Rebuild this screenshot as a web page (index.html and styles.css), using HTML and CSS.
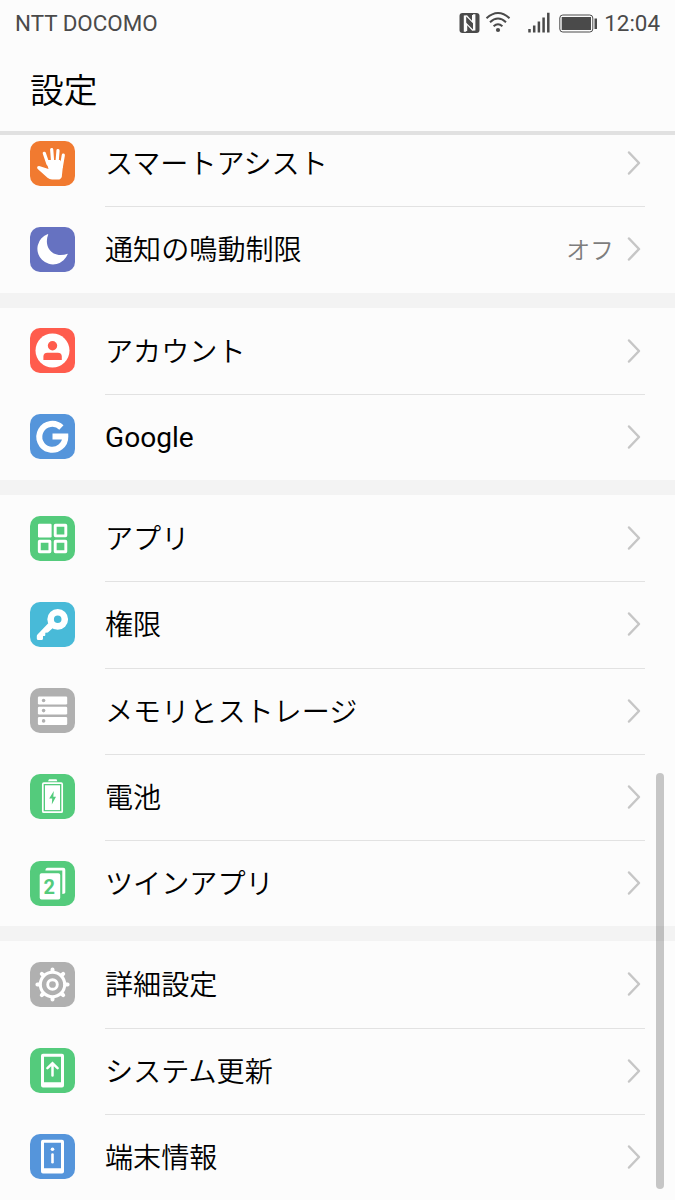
FILE: index.html
```html
<!DOCTYPE html>
<html lang="ja">
<head>
<meta charset="utf-8">
<title>設定</title>
<link rel="stylesheet" href="styles.css">
</head>
<body>
<div class="screen">
  <header class="header">
    <div class="status">
      <span class="carrier">NTT DOCOMO</span>
      <svg class="status-icons" width="140" height="24" viewBox="0 0 140 24">
        <rect x="1.5" y="2" width="20" height="20" rx="3" fill="#4a4a4a"/>
        <path d="M5.8 20.8V4.5L9 4.2L14 9.8V4H15.2V12.6L8.2 5.5V20.8Z" fill="#fcfcfc"/>
        <path d="M17.4 3.2V19.5L14.2 19.8L9.2 14.2V20H8V11.4L15 18.5V3.2Z" fill="#fcfcfc"/>
        <g fill="none" stroke="#4a4a4a" stroke-width="2">
          <path d="M28.5 7.2Q40-3.2 51.5 7.2"/>
          <path d="M32 11.2Q40 3.8 48 11.2"/>
          <path d="M35.6 15.2Q40 11.2 44.4 15.2"/>
        </g>
        <circle cx="40" cy="19" r="2.1" fill="#4a4a4a"/>
        <path d="M71.5 18v3.6M76.2 14.5v7.1M80.9 10.5v11.1M85.6 6.5v15.1M90.3 1.7v19.9" stroke="#4a4a4a" stroke-width="2.5"/>
        <rect x="101.8" y="4" width="33" height="17" rx="3" fill="none" stroke="#4a4a4a" stroke-width="1"/>
        <rect x="103.7" y="6" width="29.3" height="13" fill="#4a4a4a"/>
        <rect x="136.5" y="7.5" width="2.5" height="10.5" fill="#4a4a4a"/>
      </svg>
      <span class="clock">12:04</span>
    </div>
    <h1 class="title">設定</h1>
  </header>

  <main class="list">
    <section class="group">
      <div class="row">
        <svg class="icon orange" viewBox="0 0 45 45">
          <path d="M14.3 12.3L18 23M21.7 8.5L22.7 22M28 9.5L27 22M33.3 14.2L31.3 26" stroke="#fff" stroke-width="3.2" stroke-linecap="round"/>
          <path d="M16 19L18.5 28L10 25.2Q7.8 24.8 7.2 26Q6.8 27.2 8 28.2L17.5 36.8Q19.5 38.6 22 38.6H28Q31 38.6 31.8 35.8L33 24L30 19Z" fill="#fff"/>
        </svg>
        <span class="label">スマートアシスト</span>
        <svg class="chevron" viewBox="0 0 14 26"><path d="M2 2.5L12 13L2 23.5"/></svg>
      </div>
      <div class="row">
        <svg class="icon indigo" viewBox="0 0 45 45">
          <path d="M18 7A15.6 15.6 0 1 0 37.8 26.7C29.5 29.6 22.4 27.5 19 22C16.3 17.4 16.3 12.3 18.2 7.6Z" fill="#fff"/>
        </svg>
        <span class="label">通知の鳴動制限</span>
        <span class="value">オフ</span>
        <svg class="chevron" viewBox="0 0 14 26"><path d="M2 2.5L12 13L2 23.5"/></svg>
      </div>
    </section>

    <section class="group">
      <div class="row">
        <svg class="icon red" viewBox="0 0 45 45">
          <circle cx="22.5" cy="22.5" r="17" fill="#fff"/>
          <g fill="#ff5c4d"><circle cx="22.5" cy="17.7" r="4.7"/><path d="M13.4 32V28.5Q13.4 24.7 17.4 24.7H27.8Q31.8 24.7 31.8 28.5V32Z"/></g>
        </svg>
        <span class="label">アカウント</span>
        <svg class="chevron" viewBox="0 0 14 26"><path d="M2 2.5L12 13L2 23.5"/></svg>
      </div>
      <div class="row">
        <svg class="icon blue" viewBox="0 0 45 45">
          <path d="M31.4 13.5A13 13 0 1 0 35.3 22.5H22.5" fill="none" stroke="#fff" stroke-width="6"/>
        </svg>
        <span class="label latin">Google</span>
        <svg class="chevron" viewBox="0 0 14 26"><path d="M2 2.5L12 13L2 23.5"/></svg>
      </div>
    </section>

    <section class="group">
      <div class="row">
        <svg class="icon green" viewBox="0 0 45 45">
          <rect x="8" y="7.8" width="13.6" height="13.6" rx="1.2" fill="#fff"/>
          <g fill="none" stroke="#fff" stroke-width="2.9">
            <rect x="25.2" y="9.3" width="10.6" height="10.6" rx=".3"/>
            <rect x="9.3" y="25.2" width="10.6" height="10.6" rx=".3"/>
            <rect x="25.2" y="25.2" width="10.6" height="10.6" rx=".3"/>
          </g>
        </svg>
        <span class="label">アプリ</span>
        <svg class="chevron" viewBox="0 0 14 26"><path d="M2 2.5L12 13L2 23.5"/></svg>
      </div>
      <div class="row">
        <svg class="icon cyan" viewBox="0 0 45 45">
          <circle cx="27.7" cy="17.3" r="7.1" fill="none" stroke="#fff" stroke-width="6.6"/>
          <path d="M18.5 21L7.5 32.5Q6.8 33.2 6.8 34.2V36.5Q6.8 38 8.3 38H11.5Q13 38 13 36.5V34Q14.8 34.3 15.3 33.2V30.7Q18.3 30.8 18.7 29.7L24 25Z" fill="#fff"/>
        </svg>
        <span class="label">権限</span>
        <svg class="chevron" viewBox="0 0 14 26"><path d="M2 2.5L12 13L2 23.5"/></svg>
      </div>
      <div class="row">
        <svg class="icon gray" viewBox="0 0 45 45">
          <g fill="#fff"><rect x="7.9" y="8.5" width="29.3" height="8" rx="1.2"/><rect x="7.9" y="18.7" width="29.3" height="7.8" rx="1.2"/><rect x="7.9" y="28.9" width="29.3" height="8" rx="1.2"/></g>
          <g fill="#b0b0b0"><circle cx="13.6" cy="12.5" r="1.8"/><circle cx="13.6" cy="22.6" r="1.8"/><circle cx="13.6" cy="32.9" r="1.8"/></g>
        </svg>
        <span class="label">メモリとストレージ</span>
        <svg class="chevron" viewBox="0 0 14 26"><path d="M2 2.5L12 13L2 23.5"/></svg>
      </div>
      <div class="row">
        <svg class="icon green" viewBox="0 0 45 45">
          <path d="M18 7.3L19 5.2H26.5L27.3 7.3Z" fill="#fff"/>
          <rect x="12.8" y="9.2" width="19.4" height="29" rx="1" fill="none" stroke="#fff" stroke-width="1.7"/>
          <rect x="15" y="11.3" width="15" height="24.8" fill="#fff"/>
          <path d="M23.8 17L19.2 24.5H22.2L21.8 30.5L26 22.8H23.3Z" fill="#54cb7c"/>
        </svg>
        <span class="label">電池</span>
        <svg class="chevron" viewBox="0 0 14 26"><path d="M2 2.5L12 13L2 23.5"/></svg>
      </div>
      <div class="row">
        <svg class="icon green" viewBox="0 0 45 45">
          <rect x="9.7" y="12.2" width="20.5" height="26.4" rx="1.8" fill="#fff"/>
          <path d="M15.4 9.6Q15.4 6.7 17.7 6.7H33.3Q35.3 6.7 35.3 8.7V31.3Q35.3 33 32.3 33V9.6Z" fill="#fff"/>
          <text class="badge-number" x="19.2" y="32.5">2</text>
        </svg>
        <span class="label">ツインアプリ</span>
        <svg class="chevron" viewBox="0 0 14 26"><path d="M2 2.5L12 13L2 23.5"/></svg>
      </div>
    </section>

    <section class="group">
      <div class="row">
        <svg class="icon gray" viewBox="0 0 45 45">
          <circle cx="22.5" cy="22.5" r="12.2" fill="none" stroke="#fff" stroke-width="3.1"/>
          <circle cx="22.5" cy="22.5" r="4.8" fill="none" stroke="#fff" stroke-width="2.9"/>
          <path d="M22.5 9V7.4M22.5 36v1.6M9 22.5H7.4M36 22.5h1.6M13 13l-1.2-1.2M32 13l1.2-1.2M13 32l-1.2 1.2M32 32l1.2 1.2" stroke="#fff" stroke-width="4" stroke-linecap="round"/>
        </svg>
        <span class="label">詳細設定</span>
        <svg class="chevron" viewBox="0 0 14 26"><path d="M2 2.5L12 13L2 23.5"/></svg>
      </div>
      <div class="row">
        <svg class="icon green" viewBox="0 0 45 45">
          <path fill="#fff" fill-rule="evenodd" d="M13 5.8H32Q34 5.8 34 7.8V37.6Q34 39.6 32 39.6H13Q11 39.6 11 37.6V7.8Q11 5.8 13 5.8ZM14 8.8V34.2H31V8.8Z"/>
          <path d="M22.5 27.5V15.5M17.4 20.2L22.5 15.3L27.6 20.2" fill="none" stroke="#fff" stroke-width="2.5" stroke-linecap="round"/>
        </svg>
        <span class="label">システム更新</span>
        <svg class="chevron" viewBox="0 0 14 26"><path d="M2 2.5L12 13L2 23.5"/></svg>
      </div>
      <div class="row">
        <svg class="icon blue" viewBox="0 0 45 45">
          <path fill="#fff" fill-rule="evenodd" d="M13 5.8H32Q34 5.8 34 7.8V37.6Q34 39.6 32 39.6H13Q11 39.6 11 37.6V7.8Q11 5.8 13 5.8ZM14 8.8V34.2H31V8.8Z"/>
          <circle cx="22.5" cy="15.2" r="1.8" fill="#fff"/>
          <path d="M22.5 20.5V28.3" stroke="#fff" stroke-width="2.6" stroke-linecap="round"/>
        </svg>
        <span class="label">端末情報</span>
        <svg class="chevron" viewBox="0 0 14 26"><path d="M2 2.5L12 13L2 23.5"/></svg>
      </div>
    </section>
    <div class="scrollbar"></div>
  </main>
</div>
</body>
</html>
```
FILE: styles.css
```css
body {
  margin: 0;
  background: #fcfcfc;
}

.screen {
  display: flex;
  flex-direction: column;
  width: 675px;
  height: 1200px;
  overflow: hidden;
  color: #000;
  font-family: "Noto Sans CJK JP", sans-serif;
  font-weight: 350;
}

.header {
  box-sizing: border-box;
  flex: none;
  height: 135px;
  border-bottom: 4px solid #e1e1e1;
}

.status {
  display: flex;
  align-items: center;
  height: 46px;
  padding: 0 15px;
  color: #4a4a4a;
  font: 22.4px/46px Roboto, sans-serif;
}

.carrier {
  flex: 1;
}

.status-icons {
  margin-right: 6px;
}

.title {
  margin: 0;
  padding-left: 30px;
  font-size: 33.75px;
  line-height: 86px;
  font-weight: 350;
}

.list {
  position: relative;
  flex: 1;
  display: flex;
  flex-direction: column;
  justify-content: flex-end;
  gap: 15px;
  overflow: hidden;
  background: #f3f3f3;
}

.group {
  flex: none;
  background: #fcfcfc;
}

.row {
  position: relative;
  display: flex;
  align-items: center;
  height: 86.25px;
  padding: 0 34px 0 30px;
}

.row + .row::before {
  content: "";
  position: absolute;
  top: 0;
  left: 105px;
  right: 30px;
  height: 1px;
  background: #e2e2e2;
}

.icon {
  flex: none;
  width: 45px;
  height: 45px;
  margin-right: 30px;
  border-radius: 10px;
}

.orange { background: #f17a30; }
.indigo { background: #6672c1; }
.red { background: #ff5c4d; }
.blue { background: #5595db; }
.green { background: #54cb7c; }
.cyan { background: #48bad8; }
.gray { background: #b0b0b0; }

.label {
  flex: 1;
  padding-bottom: 2px;
  font-size: 28.1px;
  line-height: 40px;
}

.latin {
  padding: 2px 0 0;
  font-family: Roboto, sans-serif;
  font-weight: 400;
}

.value {
  margin-right: 13px;
  color: #7d7d7d;
  font-size: 23.9px;
  line-height: 36px;
}

.chevron {
  flex: none;
  width: 14px;
  height: 26px;
  fill: none;
  stroke: #c6c6c6;
  stroke-width: 2.5;
  stroke-linecap: round;
  stroke-linejoin: round;
}

.badge-number {
  fill: #54cb7c;
  font: 700 20px Roboto, sans-serif;
  text-anchor: middle;
}

.scrollbar {
  position: absolute;
  right: 11px;
  bottom: 11px;
  width: 8px;
  height: 416px;
  border-radius: 4px;
  background: rgba(0, 0, 0, 0.21);
}
```
